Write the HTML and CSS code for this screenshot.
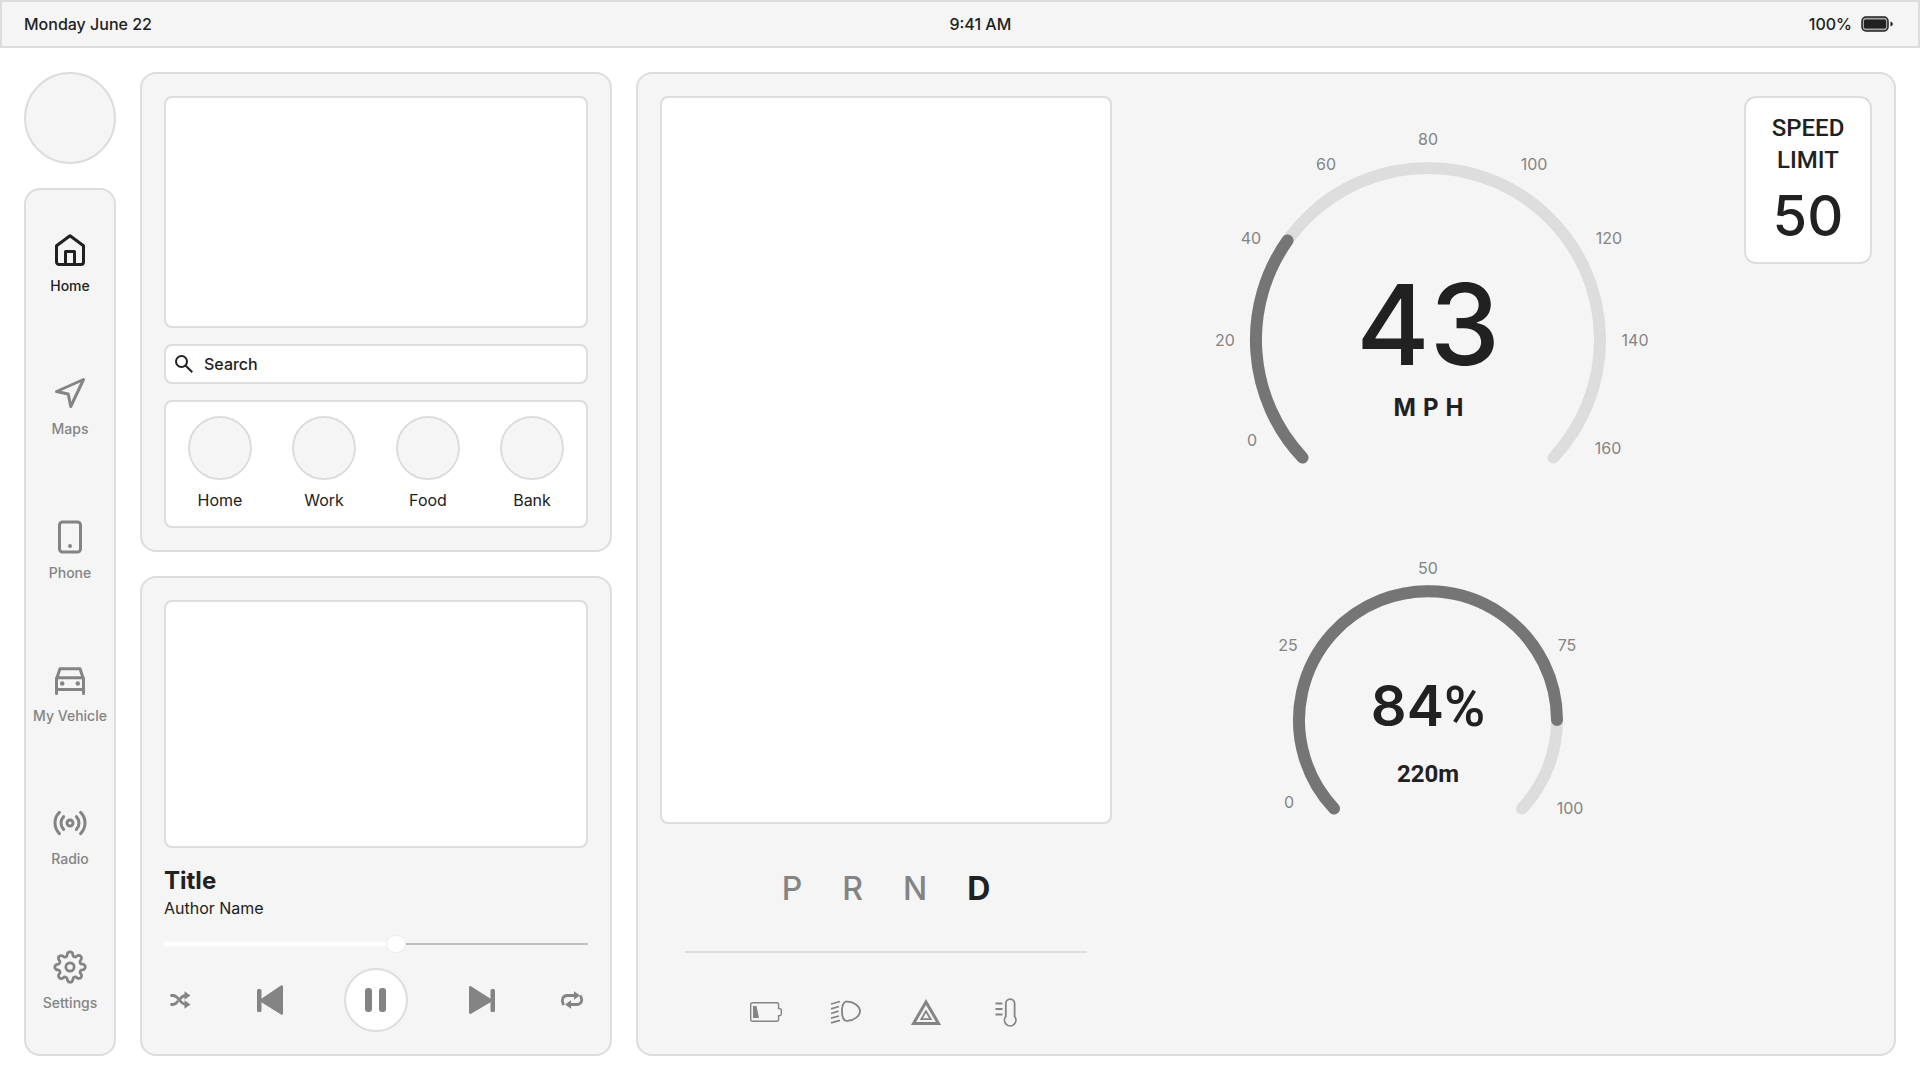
FILE: index.html
```html
<!DOCTYPE html>
<html lang="en">
<head>
<meta charset="utf-8">
<meta name="viewport" content="width=device-width, initial-scale=1">
<title>Vehicle dashboard</title>
<link rel="stylesheet" href="styles.css">
</head>
<body>
<header class="status">
  <span>Monday June 22</span>
  <time datetime="09:41">9:41 AM</time>
  <span class="status-power">100%
    <svg width="36" height="16" viewBox="0 0 36 16" aria-hidden="true">
      <rect x="2" y="1" width="26" height="14" rx="4" fill="#a6a6a6" stroke="#212121" stroke-width="1.5"/>
      <rect x="4" y="3.5" width="22" height="9" rx="1.5" fill="#212121"/>
      <path d="M30.5 5.5c3 .8 3 4.200 0 5z" fill="#212121"/>
    </svg>
  </span>
</header>

<div class="page">
  <div class="rail">
    <div class="avatar"></div>
    <nav class="nav" aria-label="Main">
      <a class="nav-item nav-item-active" href="#home" aria-current="page">
        <svg class="nav-icon" viewBox="0 0 24 24" aria-hidden="true"><path d="M3 9.200 12 2.500l9 6.700V20a1.700 1.700 0 0 1-1.700 1.700H4.700A1.700 1.700 0 0 1 3 20z"/><path d="M9 21.700V13h6v8.700"/></svg>
        Home</a>
      <a class="nav-item" href="#maps">
        <svg class="nav-icon" viewBox="0 0 24 24" aria-hidden="true"><path d="M3 11 21 3l-8.500 18-1.700-8.300z"/></svg>
        Maps</a>
      <a class="nav-item" href="#phone">
        <svg class="nav-icon" viewBox="0 0 24 24" aria-hidden="true"><rect x="5" y="2" width="14" height="20" rx="2"/><circle class="solid" cx="12" cy="18" r="1.300"/></svg>
        Phone</a>
      <a class="nav-item" href="#vehicle">
        <svg class="nav-icon" viewBox="0 0 24 24" aria-hidden="true"><path d="M3 21v-9.500L5.300 4.500h13.400L21 11.500V21M3 10.500h18M3 18.300h18"/><circle class="solid" cx="6.800" cy="14.400" r="1.500"/><circle class="solid" cx="17.200" cy="14.400" r="1.500"/></svg>
        My Vehicle</a>
      <a class="nav-item" href="#radio">
        <svg class="nav-icon" viewBox="0 0 24 24" aria-hidden="true"><circle cx="12" cy="12" r="2"/><path d="M16.240 7.760a6 6 0 0 1 0 8.490M7.760 16.240a6 6 0 0 1 0-8.490M19.070 4.930a10 10 0 0 1 0 14.140M4.930 19.070a10 10 0 0 1 0-14.140"/></svg>
        Radio</a>
      <a class="nav-item" href="#settings">
        <svg class="nav-icon" viewBox="-1 -1 26 26" aria-hidden="true"><circle cx="12" cy="12" r="3"/><path d="M19.400 15a1.650 1.650 0 0 0 .33 1.820l.06.06a2 2 0 0 1 0 2.830 2 2 0 0 1-2.830 0l-.06-.06a1.650 1.650 0 0 0-1.820-.33 1.650 1.650 0 0 0-1 1.510V21a2 2 0 0 1-2 2 2 2 0 0 1-2-2v-.09A1.650 1.650 0 0 0 9 19.400a1.650 1.650 0 0 0-1.820.33l-.06.06a2 2 0 0 1-2.830 0 2 2 0 0 1 0-2.830l.06-.06a1.650 1.650 0 0 0 .33-1.820 1.650 1.650 0 0 0-1.510-1H3a2 2 0 0 1-2-2 2 2 0 0 1 2-2h.09A1.650 1.650 0 0 0 4.600 9a1.650 1.650 0 0 0-.33-1.820l-.06-.06a2 2 0 0 1 0-2.830 2 2 0 0 1 2.830 0l.06.06a1.650 1.650 0 0 0 1.820.33H9a1.650 1.650 0 0 0 1-1.510V3a2 2 0 0 1 2-2 2 2 0 0 1 2 2v.09a1.650 1.650 0 0 0 1 1.510 1.650 1.650 0 0 0 1.820-.33l.06-.06a2 2 0 0 1 2.830 0 2 2 0 0 1 0 2.830l-.06.06a1.650 1.650 0 0 0-.33 1.820V9a1.650 1.650 0 0 0 1.510 1H21a2 2 0 0 1 2 2 2 2 0 0 1-2 2h-.09a1.650 1.650 0 0 0-1.510 1z"/></svg>
        Settings</a>
    </nav>
  </div>

  <div class="side">
    <section class="card places" aria-label="Navigation">
      <div class="panel"></div>
      <label class="search">
        <svg width="20" height="20" viewBox="0 0 20 20" aria-hidden="true"><circle cx="7.500" cy="7.500" r="5.500"/><path d="m11.500 11.500 6.800 6.800"/></svg>
        <input class="search-input" type="search" placeholder="Search" aria-label="Search">
      </label>
      <div class="favorites">
        <button class="favorite" type="button"><span class="favorite-dot"></span>Home</button>
        <button class="favorite" type="button"><span class="favorite-dot"></span>Work</button>
        <button class="favorite" type="button"><span class="favorite-dot"></span>Food</button>
        <button class="favorite" type="button"><span class="favorite-dot"></span>Bank</button>
      </div>
    </section>

    <section class="card player" aria-label="Now playing">
      <div class="panel"></div>
      <h2 class="track-title">Title</h2>
      <p class="track-author">Author Name</p>
      <input class="seek" type="range" min="0" max="100" value="55" aria-label="Playback position">
      <div class="controls">
        <button class="control" type="button" aria-label="Shuffle">
          <svg width="32" height="32" viewBox="0 0 32 32"><g class="line"><path d="M7.500 11.500h1.500c6 0 6.500 9 13.500 9M7.500 20.500h1.500c2 0 3.200-1.200 4.300-2.700M16.800 14.200c1.200-1.600 2.700-2.700 5.700-2.700"/></g><path d="m20.500 7.200 6 4.300-6 4.300zM20.500 16.200l6 4.300-6 4.300z"/></svg>
        </button>
        <button class="control" type="button" aria-label="Previous">
          <svg width="32" height="32" viewBox="0 0 32 32"><rect x="3" y="5" width="4.500" height="23" rx="1.500"/><path d="M7 15 27 1.500Q29 .5 29 2.500v27Q29 31.500 27 30.500L7 18z"/></svg>
        </button>
        <button class="control control-main" type="button" aria-label="Pause">
          <svg width="32" height="32" viewBox="0 0 32 32"><rect x="5" y="4" width="7" height="24" rx="3"/><rect x="19" y="4" width="7" height="24" rx="3"/></svg>
        </button>
        <button class="control" type="button" aria-label="Next">
          <svg width="32" height="32" viewBox="0 0 32 32"><rect x="24.500" y="5" width="4.500" height="23" rx="1.500"/><path d="M25 15 5 2.300Q3 1.500 3 3.500v25Q3 30.500 5 29.700L25 18z"/></svg>
        </button>
        <button class="control" type="button" aria-label="Repeat">
          <svg width="32" height="32" viewBox="0 0 32 32"><g class="line"><path d="M7.200 20c-2-4.500-.5-8.500 4.300-8.500h8M24.800 12.500c2 4.500.5 8-4.300 8h-7"/></g><path d="m18 7.200 6 4.300-6 4.300zM15 16.200l-6 4.300 6 4.300z"/></svg>
        </button>
      </div>
    </section>
  </div>

  <main class="card cluster">
    <div class="drive">
      <div class="panel"></div>
      <div class="gears" role="group" aria-label="Gear">
        <span>P</span><span>R</span><span>N</span><span class="gear-active" aria-current="true">D</span>
      </div>
      <hr class="rule">
      <div class="warnings">
        <svg class="warning" viewBox="0 0 32 32" role="img" aria-label="Low battery"><path d="M2 6.700h25a1.600 1.600 0 0 1 1.600 1.600v4.300h1.200a1.500 1.500 0 0 1 1.500 1.500v4a1.500 1.500 0 0 1-1.500 1.500h-1.200v4a1.600 1.600 0 0 1-1.600 1.600H2.300A1.600 1.600 0 0 1 .7 23.600V8.300a1.600 1.600 0 0 1 1.600-1.600z" stroke-width="1.400"/><path class="solid" d="M3 10h3.500L9 22H3z"/></svg>
        <svg class="warning" viewBox="0 0 32 32" role="img" aria-label="Headlights"><path d="M15.500 5.700C24 4.500 30 11 30 15.200S24 25.700 15.500 24.700C10.800 22.500 10.800 7.900 15.500 5.700zM1 8l9-2.500M1 12.800l8-2.300M1 17.500l7.500-2.300M1 22.200l8-2.200M1 26.800l9-2.500"/></svg>
        <svg class="warning" viewBox="0 0 32 32" role="img" aria-label="Hazard lights"><path d="M16 6 3.500 27.500h25z" stroke-width="3"/><path d="m16 15.200-4.700 8h9.400z"/></svg>
        <svg class="warning" viewBox="0 0 32 32" role="img" aria-label="Engine temperature"><path d="M15.800 20.500V7.500a4.200 4.200 0 0 1 8.800 0v13a5.700 5.700 0 1 1-8.800 0zM5.500 7.500h7M5.500 13h7M5.500 18.500h7"/></svg>
      </div>
    </div>

    <div class="gauges">
      <svg class="gauge" width="440" height="360" viewBox="-220 -220 440 360" role="img" aria-label="Speed 43 miles per hour">
        <path class="gauge-track" d="M-125.500 117.500A172 172 0 1 1 125.500 117.500"/>
        <path class="gauge-value" d="M-125.500 117.500A172 172 0 0 1-140.500-99.500"/>
        <g class="gauge-label">
          <text x="-176" y="106">0</text>
          <text x="-203" y="6">20</text>
          <text x="-177" y="-96">40</text>
          <text x="-102" y="-170">60</text>
          <text x="0" y="-195">80</text>
          <text x="106" y="-170">100</text>
          <text x="181" y="-96">120</text>
          <text x="207" y="6">140</text>
          <text x="180" y="114">160</text>
        </g>
        <text class="gauge-speed" x="0" y="25">43</text>
        <text class="gauge-unit" x="4" y="76">MPH</text>
      </svg>
      <svg class="gauge" width="360" height="300" viewBox="-180 -180 360 300" role="img" aria-label="Charge 84 percent">
        <path class="gauge-track" d="M-94 88.500A129 129 0 1 1 94 88.500"/>
        <path class="gauge-value" d="M-94 88.500A129 129 0 1 1 129 0"/>
        <g class="gauge-label">
          <text x="-139" y="88">0</text>
          <text x="-140" y="-69">25</text>
          <text x="0" y="-146">50</text>
          <text x="139" y="-69">75</text>
          <text x="142" y="94">100</text>
        </g>
        <text class="gauge-charge" x="0" y="6">84<tspan class="gauge-percent">%</tspan></text>
        <text class="gauge-range" x="0" y="62">220m</text>
      </svg>
    </div>

    <div class="limit">
      <span class="limit-label">SPEED LIMIT</span>
      <span class="limit-value">50</span>
    </div>
  </main>
</div>
</body>
</html>
```
FILE: styles.css
```css
:root {
  --ink: #212121;
  --muted: #848484;
  --surface: #f5f5f5;
  --line: #dddddd;
  --arc: #757575;
}

* {
  box-sizing: border-box;
}

body {
  display: flex;
  flex-direction: column;
  min-height: 100vh;
  margin: 0;
  background: #fff;
  color: var(--ink);
  font: 400 16px/24px Inter, sans-serif;
}

button {
  padding: 0;
  border: 0;
  background: none;
  color: inherit;
  font: inherit;
}

/* Status bar */
.status {
  display: flex;
  align-items: center;
  justify-content: space-between;
  height: 48px;
  padding: 0 22px;
  border: 2px solid var(--line);
  background: var(--surface);
  font-weight: 500;
}

.status-power {
  display: flex;
  align-items: center;
  gap: 8px;
}

/* Page frame */
.page {
  display: grid;
  flex: 1;
  grid-template-columns: 92px 472px minmax(0, 1fr);
  gap: 24px;
  padding: 24px;
}

.card {
  padding: 22px;
  border: 2px solid var(--line);
  border-radius: 16px;
  background: var(--surface);
}

.panel {
  flex: 1;
  border: 2px solid var(--line);
  border-radius: 8px;
  background: #fff;
}

/* Left rail */
.rail,
.side {
  display: flex;
  flex-direction: column;
  gap: 24px;
}

.avatar {
  height: 92px;
  border: 2px solid var(--line);
  border-radius: 50%;
  background: var(--surface);
}

.nav {
  display: flex;
  flex: 1;
  flex-direction: column;
  padding: 2px 0;
  border: 2px solid var(--line);
  border-radius: 16px;
  background: var(--surface);
}

.nav-item {
  display: flex;
  flex: 1;
  flex-direction: column;
  align-items: center;
  justify-content: center;
  gap: 9px;
  color: var(--muted);
  font-size: 14px;
  font-weight: 500;
  line-height: 18px;
  text-decoration: none;
}

.nav-item-active {
  color: var(--ink);
}

.nav-icon {
  width: 36px;
  height: 36px;
  fill: none;
  stroke: currentColor;
  stroke-width: 2;
  stroke-linecap: round;
  stroke-linejoin: round;
}

.nav-icon .solid {
  fill: currentColor;
  stroke: none;
}

/* Places */
.places,
.player {
  display: flex;
  flex: 1;
  flex-direction: column;
}

.places {
  gap: 16px;
}

.search {
  display: flex;
  align-items: center;
  gap: 10px;
  height: 40px;
  padding: 0 8px;
  border: 2px solid var(--line);
  border-radius: 8px;
  background: #fff;
}

.search svg {
  fill: none;
  stroke: var(--ink);
  stroke-width: 2;
}

.search-input {
  flex: 1;
  padding: 0;
  border: 0;
  outline: 0;
  background: none;
  color: var(--ink);
  font: inherit;
  font-weight: 500;
}

.search-input::placeholder {
  color: var(--ink);
}

.favorites {
  display: flex;
  justify-content: center;
  gap: 40px;
  padding: 14px 0;
  border: 2px solid var(--line);
  border-radius: 8px;
  background: #fff;
}

.favorite {
  display: flex;
  flex-direction: column;
  align-items: center;
  gap: 8px;
}

.favorite-dot {
  width: 64px;
  height: 64px;
  border: 2px solid var(--line);
  border-radius: 50%;
  background: var(--surface);
}

/* Player */
.track-title {
  margin: 18px 0 0;
  font-size: 24px;
  font-weight: 700;
  line-height: 30px;
}

.track-author {
  margin: 0;
}

.seek {
  width: 100%;
  height: 24px;
  margin: 12px 0;
  appearance: none;
  background:
    linear-gradient(#fff, #fff) 0 50% / 55% 4px no-repeat,
    linear-gradient(#c0c0c0, #c0c0c0) 0 50% / 100% 2px no-repeat;
}

.seek::-webkit-slider-thumb {
  width: 20px;
  height: 18px;
  appearance: none;
  border: 1px solid #ececec;
  border-radius: 50%;
  background: #fff;
}

.controls {
  display: flex;
  align-items: center;
  justify-content: space-between;
}

.control {
  display: grid;
  color: var(--muted);
  place-items: center;
}

.control svg {
  fill: currentColor;
}

.control .line {
  fill: none;
  stroke: currentColor;
  stroke-width: 2.8;
  stroke-linecap: round;
}

.control-main {
  width: 64px;
  height: 64px;
  border: 2px solid var(--line);
  border-radius: 50%;
  background: #fff;
}

/* Instrument cluster */
.cluster {
  display: grid;
  grid-template-columns: 452px minmax(0, 1fr) 128px;
}

.drive {
  display: flex;
  flex-direction: column;
}

.gears {
  display: flex;
  justify-content: center;
  gap: 40px;
  padding: 41px 0 38px;
  color: var(--muted);
  font-size: 32px;
  font-weight: 500;
  line-height: 48px;
}

.gear-active {
  color: var(--ink);
  font-weight: 700;
}

.rule {
  width: calc(100% - 50px);
  height: 2px;
  margin: 0 auto;
  border: 0;
  background: var(--line);
}

.warnings {
  display: flex;
  justify-content: center;
  gap: 48px;
  padding: 43px 0 4px;
}

.warning {
  width: 32px;
  height: 32px;
  fill: none;
  stroke: var(--muted);
  stroke-width: 1.8;
}

.warning .solid {
  fill: var(--muted);
  stroke: none;
}

/* Gauges */
.gauges {
  display: flex;
  flex-direction: column;
  align-items: center;
  gap: 60px;
  padding-top: 24px;
}

.gauge {
  max-width: 100%;
  fill: var(--ink);
  text-anchor: middle;
}

.gauge-track,
.gauge-value {
  fill: none;
  stroke: var(--line);
  stroke-width: 12;
  stroke-linecap: round;
}

.gauge-value {
  stroke: var(--arc);
}

.gauge-label {
  fill: var(--muted);
}

.gauge-speed {
  font-size: 112px;
  font-weight: 500;
}

.gauge-unit {
  font-size: 24px;
  font-weight: 700;
  letter-spacing: 7px;
}

.gauge-charge {
  font-size: 56px;
  font-weight: 600;
}

.gauge-percent {
  font-family: Roboto, sans-serif;
  font-weight: 500;
}

.gauge-range {
  font: 700 24px Roboto, sans-serif;
}

/* Speed limit sign */
.limit {
  display: flex;
  flex-direction: column;
  align-items: center;
  align-self: start;
  padding: 14px 12px 6px;
  border: 2px solid var(--line);
  border-radius: 12px;
  background: #fff;
  font-weight: 500;
  text-align: center;
}

.limit-label {
  width: min-content;
  font-family: Roboto, sans-serif;
  font-size: 24px;
  line-height: 32px;
}

.limit-value {
  font-size: 56px;
  line-height: 80px;
}
```
